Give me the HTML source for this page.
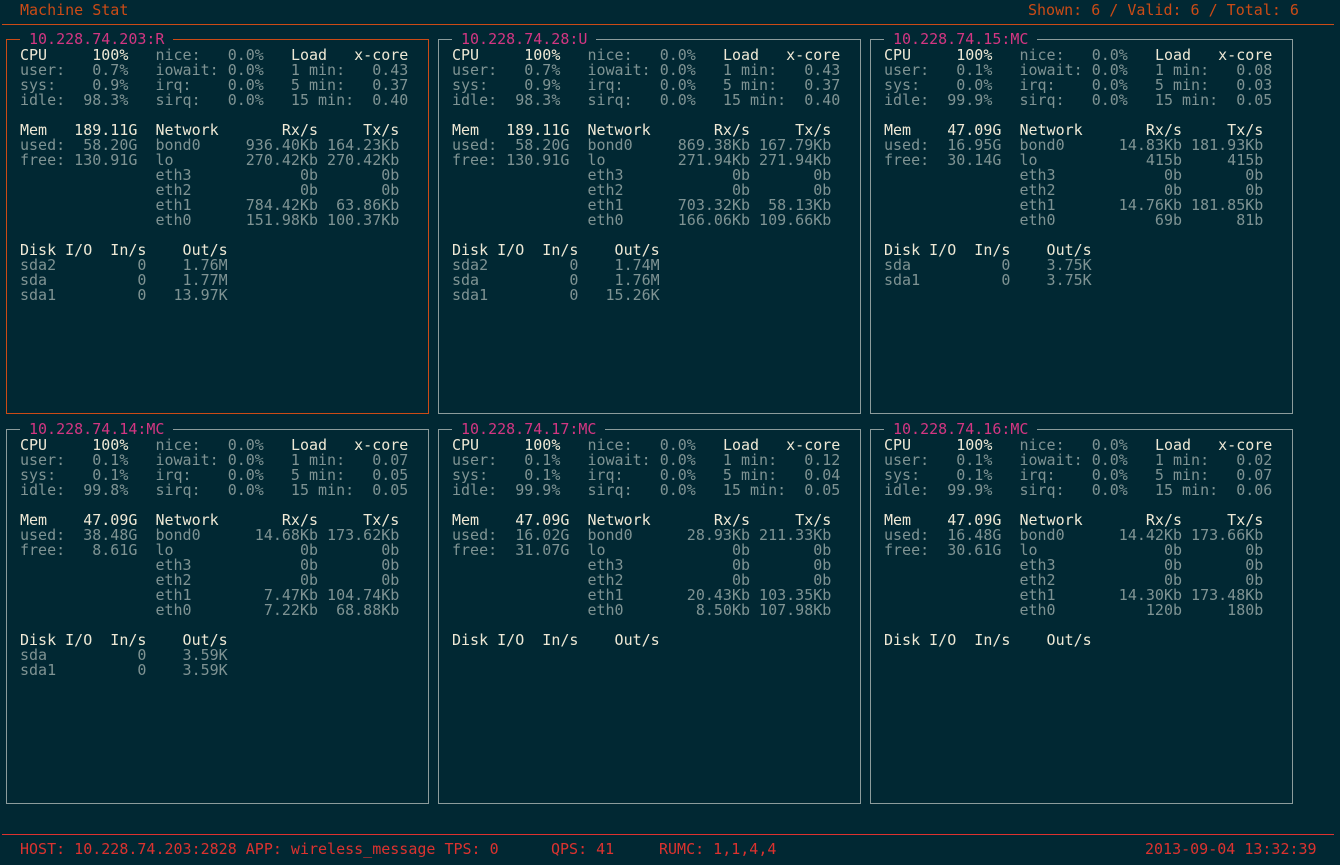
<!DOCTYPE html>
<html><head><meta charset="utf-8"><style>
html,body{margin:0;padding:0;width:1340px;height:865px;background:#012833;overflow:hidden;font-family:"DejaVu Sans Mono","Liberation Mono",monospace;font-size:15px;}
.a{position:absolute;white-space:pre;line-height:15px;}
.box{position:absolute;width:421px;height:373px;border:1px solid #8c9c9c;}
.t{position:absolute;color:#d33682;background:#012833;padding:0 9px;line-height:15px;white-space:pre;}
pre{position:absolute;margin:0;font:inherit;line-height:15px;color:#7f9393;}
.w{color:#eee8d5;}
.o{color:#cb4b16;}
.r{color:#dc322f;}
</style></head><body>
<div class="a o" style="left:20px;top:3px">Machine Stat</div>
<div class="a o" style="left:1028px;top:3px">Shown: 6 / Valid: 6 / Total: 6</div>
<div style="position:absolute;left:2px;top:24px;width:1332px;height:1px;background:#cb4b16"></div>

<div class="box" style="left:6px;top:39px;border-color:#cb4b16"></div>
<div class="t" style="left:20px;top:32px">10.228.74.203:R</div>
<pre style="left:20px;top:48px"><span class="w">CPU     100%</span>   nice:   0.0%   <span class="w">Load   x-core</span>
user:   0.7%   iowait: 0.0%   1 min:   0.43
sys:    0.9%   irq:    0.0%   5 min:   0.37
idle:  98.3%   sirq:   0.0%   15 min:  0.40

<span class="w">Mem   189.11G  Network       Rx/s     Tx/s</span>
used:  58.20G  bond0     936.40Kb 164.23Kb
free: 130.91G  lo        270.42Kb 270.42Kb
               eth3            0b       0b
               eth2            0b       0b
               eth1      784.42Kb  63.86Kb
               eth0      151.98Kb 100.37Kb

<span class="w">Disk I/O  In/s    Out/s</span>
sda2         0    1.76M
sda          0    1.77M
sda1         0   13.97K</pre>

<div class="box" style="left:438px;top:39px"></div>
<div class="t" style="left:452px;top:32px">10.228.74.28:U</div>
<pre style="left:452px;top:48px"><span class="w">CPU     100%</span>   nice:   0.0%   <span class="w">Load   x-core</span>
user:   0.7%   iowait: 0.0%   1 min:   0.43
sys:    0.9%   irq:    0.0%   5 min:   0.37
idle:  98.3%   sirq:   0.0%   15 min:  0.40

<span class="w">Mem   189.11G  Network       Rx/s     Tx/s</span>
used:  58.20G  bond0     869.38Kb 167.79Kb
free: 130.91G  lo        271.94Kb 271.94Kb
               eth3            0b       0b
               eth2            0b       0b
               eth1      703.32Kb  58.13Kb
               eth0      166.06Kb 109.66Kb

<span class="w">Disk I/O  In/s    Out/s</span>
sda2         0    1.74M
sda          0    1.76M
sda1         0   15.26K</pre>

<div class="box" style="left:870px;top:39px"></div>
<div class="t" style="left:884px;top:32px">10.228.74.15:MC</div>
<pre style="left:884px;top:48px"><span class="w">CPU     100%</span>   nice:   0.0%   <span class="w">Load   x-core</span>
user:   0.1%   iowait: 0.0%   1 min:   0.08
sys:    0.0%   irq:    0.0%   5 min:   0.03
idle:  99.9%   sirq:   0.0%   15 min:  0.05

<span class="w">Mem    47.09G  Network       Rx/s     Tx/s</span>
used:  16.95G  bond0      14.83Kb 181.93Kb
free:  30.14G  lo            415b     415b
               eth3            0b       0b
               eth2            0b       0b
               eth1       14.76Kb 181.85Kb
               eth0           69b      81b

<span class="w">Disk I/O  In/s    Out/s</span>
sda          0    3.75K
sda1         0    3.75K</pre>

<div class="box" style="left:6px;top:429px"></div>
<div class="t" style="left:20px;top:422px">10.228.74.14:MC</div>
<pre style="left:20px;top:438px"><span class="w">CPU     100%</span>   nice:   0.0%   <span class="w">Load   x-core</span>
user:   0.1%   iowait: 0.0%   1 min:   0.07
sys:    0.1%   irq:    0.0%   5 min:   0.05
idle:  99.8%   sirq:   0.0%   15 min:  0.05

<span class="w">Mem    47.09G  Network       Rx/s     Tx/s</span>
used:  38.48G  bond0      14.68Kb 173.62Kb
free:   8.61G  lo              0b       0b
               eth3            0b       0b
               eth2            0b       0b
               eth1        7.47Kb 104.74Kb
               eth0        7.22Kb  68.88Kb

<span class="w">Disk I/O  In/s    Out/s</span>
sda          0    3.59K
sda1         0    3.59K</pre>

<div class="box" style="left:438px;top:429px"></div>
<div class="t" style="left:452px;top:422px">10.228.74.17:MC</div>
<pre style="left:452px;top:438px"><span class="w">CPU     100%</span>   nice:   0.0%   <span class="w">Load   x-core</span>
user:   0.1%   iowait: 0.0%   1 min:   0.12
sys:    0.1%   irq:    0.0%   5 min:   0.04
idle:  99.9%   sirq:   0.0%   15 min:  0.05

<span class="w">Mem    47.09G  Network       Rx/s     Tx/s</span>
used:  16.02G  bond0      28.93Kb 211.33Kb
free:  31.07G  lo              0b       0b
               eth3            0b       0b
               eth2            0b       0b
               eth1       20.43Kb 103.35Kb
               eth0        8.50Kb 107.98Kb

<span class="w">Disk I/O  In/s    Out/s</span></pre>

<div class="box" style="left:870px;top:429px"></div>
<div class="t" style="left:884px;top:422px">10.228.74.16:MC</div>
<pre style="left:884px;top:438px"><span class="w">CPU     100%</span>   nice:   0.0%   <span class="w">Load   x-core</span>
user:   0.1%   iowait: 0.0%   1 min:   0.02
sys:    0.1%   irq:    0.0%   5 min:   0.07
idle:  99.9%   sirq:   0.0%   15 min:  0.06

<span class="w">Mem    47.09G  Network       Rx/s     Tx/s</span>
used:  16.48G  bond0      14.42Kb 173.66Kb
free:  30.61G  lo              0b       0b
               eth3            0b       0b
               eth2            0b       0b
               eth1       14.30Kb 173.48Kb
               eth0          120b     180b

<span class="w">Disk I/O  In/s    Out/s</span></pre>

<div style="position:absolute;left:2px;top:834px;width:1332px;height:1px;background:#dc322f"></div>
<div class="a r" style="left:20px;top:842px">HOST: 10.228.74.203:2828 APP: wireless_message TPS: 0</div>
<div class="a r" style="left:551px;top:842px">QPS: 41</div>
<div class="a r" style="left:659px;top:842px">RUMC: 1,1,4,4</div>
<div class="a r" style="left:1145px;top:842px">2013-09-04 13:32:39</div>
</body></html>
